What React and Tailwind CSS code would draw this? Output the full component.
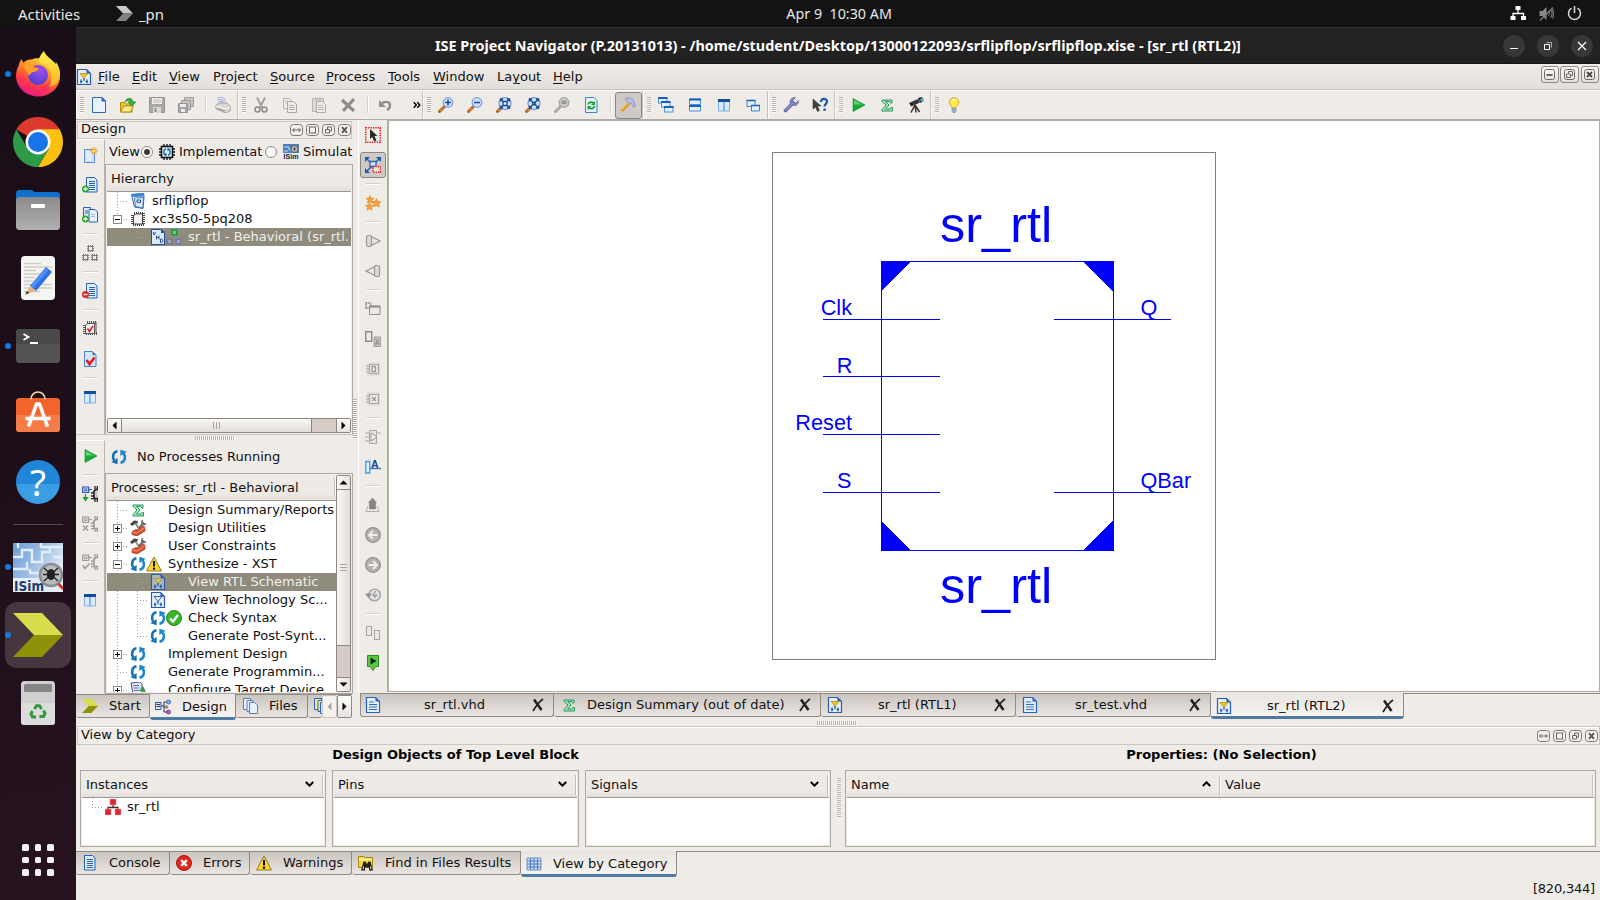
import React from "react";

/* ---------- icon helpers ---------- */
const I = ({ children, w = 16, h = 16, vb = "0 0 16 16", className = "" }) => (
  <svg width={w} height={h} viewBox={vb} fill="none" className={`block shrink-0 ${className}`}>
    {children}
  </svg>
);

const NewFile = () => (
  <I>
    <path d="M1.500.5h9.500l3.500 3.500v11.500h-13z" fill="#e9f3ff" stroke="#2f66b5" />
    <path d="M11 .5v3.500h3.500z" fill="#2a62c4" stroke="#2f66b5" />
  </I>
);
const OpenFile = () => (
  <I>
    <path d="M.5 5.500h4.500l1 1.500h6v8H.5z" fill="#e9c92c" stroke="#b58d12" />
    <path d="M.7 15l3-6h9.800l-3 6z" fill="#fbe98a" stroke="#b58d12" />
    <path d="M5 4.500c2-4.500 7.500-4 8 .5h2.800L12 9 7.800 5h2.400c-.4-1.800-2.800-2-5.200-.5z" fill="#3fb13a" stroke="#22831f" strokeWidth=".7" />
  </I>
);
const Save = () => (
  <I>
    <path d="M.5.5h15v15h-15z" fill="#a7a7a7" stroke="#959595" />
    <path d="M3 1h10v6H3z" fill="#f1efed" />
    <path d="M4 3h8M4 5h8" stroke="#bbb" />
    <path d="M4 10h8v6H4z" fill="#dcdad8" />
    <path d="M5.500 11h2v4h-2z" fill="#8c8c8c" />
  </I>
);
const SaveAll = () => (
  <I>
    <path d="M6.500.5h9v9h-9z" fill="#c8c6c4" stroke="#9a9a9a" />
    <path d="M3.500 3.500h9v9h-9z" fill="#c8c6c4" stroke="#9a9a9a" />
    <path d="M.5 6.500h9v9h-9z" fill="#a5a5a5" stroke="#949494" />
    <path d="M2 7h6v3H2zM3 12h4v3H3z" fill="#efedeb" />
  </I>
);
const Printer = () => (
  <I>
    <path d="M3 0l6 1 2 7-6 1z" fill="#f1f5fb" stroke="#a9b9d4" />
    <path d="M4.500 2.500l4 .5M5 4.500l4 .5" stroke="#7d9fd6" />
    <path d="M1 8l4-2h7l4 4v3l-5 3-10-4z" fill="#d9d8d7" stroke="#a3a3a3" />
    <path d="M1 9l10 3 4-2" stroke="#fff" />
    <path d="M3 11.500l7 2.500" stroke="#8c8c8c" />
  </I>
);
const Cut = () => (
  <I>
    <path d="M4 .5l5 10M12 .5l-5 10" stroke="#a2a2a2" strokeWidth="2" />
    <circle cx="4.500" cy="12.500" r="2.500" stroke="#8b8b8b" strokeWidth="1.500" />
    <circle cx="11.500" cy="12.500" r="2.500" stroke="#8b8b8b" strokeWidth="1.500" />
  </I>
);
const Copy = () => (
  <I>
    <path d="M1.500 1.500h6l2 2v8h-8z" fill="#efedeb" stroke="#b0b0b0" />
    <path d="M5.500 4.500h6l3 3v8h-9z" fill="#efedeb" stroke="#a8a8a8" />
    <path d="M7 8.500h5M7 10.500h6M7 12.500h6" stroke="#b4b4b4" />
    <path d="M3 4h3M3 6h2" stroke="#c0c0c0" />
  </I>
);
const Paste = () => (
  <I>
    <path d="M1.500 1.500h11v13h-11z" fill="#dcdad7" stroke="#b7b5b3" />
    <path d="M4 .5h6v3H4z" fill="#c2c0be" />
    <path d="M5.500 4.500h6l3 3v8h-9z" fill="#efedeb" stroke="#adadad" />
    <path d="M7 8.500h5M7 10.500h6M7 12.500h6" stroke="#b9b9b9" />
  </I>
);
const Del = () => (
  <I>
    <path d="M2 3l12 11M14 2L3 14" stroke="#8d8d8d" strokeWidth="3.200" />
  </I>
);
const Undo = () => (
  <I>
    <path d="M4 7c3-3 9-3 9 1 0 2-1 4-3 5" stroke="#8f8f8f" strokeWidth="2.400" />
    <path d="M2 3v7h7z" fill="#8f8f8f" />
  </I>
);
const Lens = ({ kind }) => {
  const gray = kind === "sel";
  const wide = kind === "fit" || kind === "fit2";
  const cx = wide ? 9 : 10;
  const cy = wide ? 6.500 : 5.500;
  const r = wide ? 6 : 4.800;
  return (
    <I>
      <path d="M1.500 14.500L6 10" stroke={gray ? "#a5a5a5" : "#b3641e"} strokeWidth="3" strokeLinecap="round" />
      <path d="M2 14l3.500-3.500" stroke={gray ? "#bdbdbd" : "#e09a4c"} strokeWidth="1" />
      <circle cx={cx} cy={cy} r={r} fill={gray ? "#c9c9c9" : "#cfe2fa"} stroke={gray ? "#a8a8a8" : "#7fa3dc"} strokeWidth="1.300" />
      {kind === "in" && <path d="M10 2.500v6M7 5.500h6" stroke="#1f53ae" strokeWidth="1.600" />}
      {kind === "out" && <path d="M7 5.500h6" stroke="#1f53ae" strokeWidth="1.600" />}
      {wide && (
        <g stroke="#1b4694" strokeWidth="1.300">
          <path d="M5 2.500l8 8M13 2.500l-8 8" />
          <path d="M4.500 4.500v-2.500h2.500M13.500 4.500v-2.500h-2.500M4.500 8.500v2.500h2.500M13.500 8.500v2.500h-2.500" />
          {kind === "fit" ? <path d="M7 4.500h4v4H7z" fill="#eef5ff" /> : <path d="M8 5.500h2v2H8z" fill="#eef5ff" />}
        </g>
      )}
      {gray && <path d="M7.500 3.500h5v3.500h-5z" fill="#989898" />}
    </I>
  );
};
const RefreshPage = () => (
  <I>
    <path d="M2.500.5h8.500l3 3v12H2.500z" fill="#e2f1ff" stroke="#3a86cf" />
    <path d="M5 7.500c1-3 5-3 6-.5M11.500 9c-1 3.500-5 3-6 1" stroke="#27a02b" strokeWidth="1.800" />
    <path d="M12 4v4H8zM4.500 13V9h4z" fill="#27a02b" />
  </I>
);
const Hammer = () => (
  <I>
    <path d="M1.500 14L9 6.500" stroke="#d99512" strokeWidth="3" />
    <path d="M1.500 13L8.500 6" stroke="#f9d468" strokeWidth="1" />
    <path d="M5 2c3-2 6-1.500 8 1l2.500 6-2 1.500-2-4-3-.5-2-2z" fill="#b9bde4" stroke="#7d82ba" strokeWidth=".7" />
  </I>
);
const Cascade = () => (
  <I>
    {[[0.5, 0.5], [3.500, 4.500], [6.500, 9.500]].map(([x, y]) => (
      <g key={x}>
        <rect x={x} y={y} width="8.500" height="5.500" fill="#e2f0fd" stroke="#4c93d8" />
        <path d={`M${x - 0.5} ${y + 0.5}h9.500`} stroke="#1c5fb8" strokeWidth="2" />
      </g>
    ))}
  </I>
);
const TileH = () => (
  <I>
    <path d="M2.500 2h11v5.500h-11zM2.500 9h11v5h-11z" fill="#e2f0fd" stroke="#4c93d8" />
    <path d="M2 2.500h12M2 9h12" stroke="#1c5fb8" strokeWidth="2" />
  </I>
);
const Columns = () => (
  <I>
    <path d="M2.500 2.500h11v11.500h-11z" fill="#d9eafc" stroke="#7fb0e6" />
    <path d="M2 3.500h12" stroke="#164b9c" strokeWidth="3" />
    <path d="M8 5v9" stroke="#6ea6e2" strokeWidth="1.500" />
  </I>
);
const Layer = () => (
  <I>
    <path d="M2 3.500h8v6H2z" fill="#e2f0fd" stroke="#3e88d4" />
    <path d="M6.500 8.500h8v5.500h-8z" fill="#e2f0fd" stroke="#3e88d4" />
    <path d="M1.500 3.500h9M6 8.500h9" stroke="#1c5fb8" strokeWidth="1.500" />
  </I>
);
const Wrench = () => (
  <I>
    <path d="M2.500 13.500L10 6" stroke="#6a6bb0" strokeWidth="3.600" strokeLinecap="round" />
    <path d="M12.500.5L10 3l.5 2.500L13 6l2.500-2.500c.5 3-2 5.500-5 5L7 6c-.5-3 2-6 5.500-5.500z" fill="#7f83c4" stroke="#5557a0" strokeWidth=".6" />
    <path d="M2.500 13L9 6.500" stroke="#b3b5e2" />
  </I>
);
const WhatsThis = () => (
  <I>
    <path d="M1 2v10l2.500-2 2 4.500 2-1L5.500 9H9z" fill="#444" stroke="#222" strokeWidth=".5" />
    <path d="M9 5c0-4 6-4 6-.5 0 2.500-2.500 2.500-2.500 5" stroke="#1c57a8" strokeWidth="2.200" />
    <path d="M11.400 11.500h2.400v2.300h-2.400z" fill="#1c57a8" />
  </I>
);
const Play = () => (
  <I>
    <path d="M3 1.500l12 6.500-12 6.500z" fill="#14ad35" stroke="#0e8a28" strokeWidth=".6" />
    <path d="M4 3l8 4.500H4z" fill="#5ed674" />
  </I>
);
const Sigma = () => (
  <I>
    <path d="M3 3h10v3h-1.500L10.500 4.500H6.500L10 8l-3.500 4h4.500l1-1.500h1.500V14H3v-1.500L7 8 3 4.500z" fill="#a7e6bd" stroke="#26985c" />
  </I>
);
const Telescope = () => (
  <I>
    <path d="M1 6l9-4 2 3.500-9 4z" fill="#333" />
    <path d="M10 1l4-1 1.500 4-3 2z" fill="#222" />
    <circle cx="14" cy="3" r="1.800" fill="#4ab3c6" />
    <path d="M7 8l-4 7.500M7 8l1 7.500M7 8l4.500 7" stroke="#333" strokeWidth="1.500" />
  </I>
);
const Bulb = () => (
  <I>
    <path d="M8 .8c-3 0-4.800 2-4.800 4.500C3.200 8 6 8.500 6 11h4c0-2.500 2.800-3 2.800-5.700C12.800 2.800 11 .8 8 .8z" fill="#ffe94e" stroke="#e0a91c" />
    <path d="M6.500 3.500c1-1 2-1 3-.5" stroke="#fff" strokeWidth="1.500" />
    <path d="M6 11.500h4V14l-1 1.500H7L6 14z" fill="#9fb4cf" stroke="#6c86ab" strokeWidth=".7" />
  </I>
);
const Doc = ({ x = 4, y = 0 }) => (
  <g transform={`translate(${x} ${y})`}>
    <path d="M.5.5h8l2.500 2.500v12H.5z" fill="#dcecfd" stroke="#2b63b4" />
    <path d="M3 4.500h6M3 6.500h6M3 8.500h6M3 10.500h6M3 12.500h6" stroke="#2b63b4" />
  </g>
);
const DocBlue = () => (
  <I>
    <path d="M1.500.5h9l4 4v11h-13z" fill="#e4f0fe" stroke="#2a63bb" strokeWidth="1.200" />
    <path d="M10.500.5v4h4z" fill="#2a63bb" />
    <path d="M4 5h5M4 7.500h8M4 10h8M4 12.500h8" stroke="#2f6cc4" strokeWidth="1.200" />
  </I>
);
const AddDoc = () => (
  <I>
    <Doc />
    <circle cx="3.500" cy="12" r="3.500" fill="#2fa52e" />
    <path d="M3.500 10v4M1.500 12h4" stroke="#fff" strokeWidth="1.300" />
  </I>
);
const AddCopy = () => (
  <I>
    <path d="M1.500.5h7v12h-7z" fill="#dcecfd" stroke="#2b63b4" />
    <path d="M3 4h3M3 6h3" stroke="#2b63b4" />
    <path d="M7 2.500h6l2.500 2.500v10H7z" fill="#e6f2ff" stroke="#2b63b4" />
    <path d="M9 7.500h4M9 9.500h4" stroke="#9bbfe8" />
    <circle cx="3.500" cy="12" r="3.500" fill="#2fa52e" />
    <path d="M3.500 10v4M1.500 12h4" stroke="#fff" strokeWidth="1.300" />
  </I>
);
const RemoveDoc = () => (
  <I>
    <Doc />
    <circle cx="3.500" cy="11.500" r="3.500" fill="#dc2c1c" />
    <path d="M1.500 11.500h4" stroke="#fff" strokeWidth="1.400" />
  </I>
);
const NewSource = () => (
  <I>
    <path d="M2.500 2.500h10v13h-10z" fill="#cbdff8" stroke="#5d8fd6" />
    <path d="M4 4h6v10H4z" fill="#e1edfb" />
    <path d="M12 0v8M8 4h8M9.500 1.500l5 5M14.500 1.500l-5 5" stroke="#f09a2c" strokeWidth="1.100" />
    <circle cx="12" cy="4" r="1.600" fill="#ffe06a" />
  </I>
);
const MiniChip = ({ x, y, c, bg }) => (
  <g transform={`translate(${x} ${y})`}>
    <path d="M1 .5h6M1 6.500h6M.5 1v6M6.500 1v6" stroke={c} strokeDasharray="1 1" />
    <rect x="1.500" y="1.500" width="4" height="4" fill={bg} stroke={c} />
  </g>
);
const Cells = ({ a = "#7d7d7d", b = "#7d7d7d", bg = "#efebe7", bg2 }) => (
  <I>
    <MiniChip x={5} y={0} c={a} bg={bg} />
    <MiniChip x={0} y={9} c={b} bg={bg2 || bg} />
    <MiniChip x={9} y={9} c={b} bg={bg2 || bg} />
  </I>
);
const ChipCheck = () => (
  <I>
    <path d="M5 1.500h10M2.500 4v10M15 12.500H4M13.500 1.500v12" stroke="#555" strokeWidth="3" strokeDasharray="1 1" />
    <path d="M3.500 4.500l2-2h7v10h-9z" fill="#eee" stroke="#555" />
    <path d="M5.500 7.500l2 3 3.500-5.500" stroke="#d91e2c" strokeWidth="1.600" />
  </I>
);
const DocCheck = () => (
  <I>
    <path d="M2.500.5h8l3.500 3.500v11.500h-11.500z" fill="#d5e6fb" stroke="#4a82cc" />
    <path d="M10.500.5v3.500h3.500z" fill="#3d78c8" />
    <path d="M4.500 9l3 4 5-6.500" stroke="#e01828" strokeWidth="2.600" />
  </I>
);
const PlugChip = ({ kind }) => {
  const on = kind === "run";
  const c = on ? "#222" : "#9a9a9a";
  return (
    <I>
      <path d="M.7 1h6v5.500h-6z" fill={on ? "#dfeafc" : "#e6e4e2"} stroke={on ? "#2855b0" : "#9a9a9a"} strokeWidth="1.200" />
      <path d="M2 3h3.500M2 4.700h3.500M7 3.500h3" stroke={on ? "#2855b0" : "#9a9a9a"} />
      {kind === "run" && <path d="M3.500 8v5M1.500 11.500l2 3 2-3z" stroke="#1f9a2b" fill="#1f9a2b" strokeWidth="1.200" />}
      {kind === "stop" && <path d="M1 9.500l5 5M6 9.500l-5 5" stroke={c} strokeWidth="1.500" />}
      {kind === "ok" && <path d="M1 11.500l2 3 4.500-5" stroke={c} strokeWidth="1.500" />}
      <path d="M16 3.500h-2l-2 1.500v7.500h4" stroke={c} strokeWidth="1.600" fill={on ? "#ccc" : "none"} />
      <path d="M9 7h3M9 10h3M9 12.700h3M13 13v3M15.300 13v3M13 0v3.500M15.300 0v3.500" stroke={c} strokeWidth="1.300" />
    </I>
  );
};
const Cycle = () => (
  <I>
    <path d="M6.500 2.300C2 3 1 8 3.200 11.500" stroke="#1672b5" strokeWidth="2.600" />
    <path d="M.3 13.200L6.600 9v6.200z" fill="#1672b5" />
    <path d="M9.500 13.700c4.500-.7 5.500-5.700 3.300-9.200" stroke="#1d84c9" strokeWidth="2.600" />
    <path d="M15.700 2.800L9.400 7V.8z" fill="#1d84c9" />
  </I>
);
const Warn = () => (
  <I>
    <path d="M8 1l7.500 14H.5z" fill="#fcd424" stroke="#8d8038" strokeLinejoin="round" />
    <path d="M8 5v5.500" stroke="#111" strokeWidth="2" />
    <circle cx="8" cy="12.800" r="1.200" fill="#111" />
  </I>
);
const Ok = () => (
  <I>
    <circle cx="8" cy="8" r="7.500" fill="#3ab62c" stroke="#23861a" />
    <path d="M4 8.500l3 3 5-6.500" stroke="#fff" strokeWidth="2.200" />
  </I>
);
const ErrorIc = () => (
  <I>
    <circle cx="8" cy="8" r="7.500" fill="#e3261b" stroke="#a31710" />
    <path d="M5.200 5.200l5.600 5.600M10.800 5.200l-5.600 5.600" stroke="#fff" strokeWidth="2.400" />
  </I>
);
const Tools = () => (
  <I>
    <path d="M0 4l4-3.500L8 1 7.500 3.500 5 4 2 6z" fill="#4a4a4a" />
    <path d="M5.500 3.500l4 6" stroke="#8a8a8a" strokeWidth="1.700" />
    <path d="M14 2.500L8.500 8.500" stroke="#6c6c6c" strokeWidth="2" />
    <path d="M12.500 0L11.800 3l1.700 1.500L16 3.800" stroke="#6c6c6c" strokeWidth="1.600" />
    <path d="M2 11.500l4-2 2.500.5 4-4 2.500 1v4L7 16l-5-1.500z" fill="#d5502e" stroke="#9d3118" strokeWidth=".7" />
    <path d="M2.500 12l4.200 1.200L15 7.500" stroke="#f3a088" />
  </I>
);
const SchemFile = ({ c = "#f3c51a", bg = "#e3effd" }) => (
  <I>
    <path d="M1.500.5h9l4 4v11h-13z" fill={bg} stroke="#2a5db0" strokeWidth="1.200" />
    <path d="M10.500.5v4h4z" fill="#2a5db0" />
    <path d="M4 4.500h8L8 9.500z" fill={c} stroke={c === "none" ? "#1a3a80" : "#b8921a"} strokeWidth=".8" />
    <path d="M8 9v3M4 12.500h2.500M9.500 12.500H12M5 10.500v4M11 10.500v4" stroke="#1d4fa3" strokeWidth="1.200" />
  </I>
);
const VhdFile = () => (
  <I>
    <path d="M1.500.5h10l3 3v12h-13z" fill="#d9ebfb" stroke="#1e4f98" />
    <path d="M11 .5v3.500h3.500z" fill="#1e4f98" />
    <path d="M3 3l1.300 3L5.500 3M6.500 6.500v4M9 6.500v4M6.500 8.500H9M10.500 10v3.500h1.200c1.500-.5 1.500-3 0-3.500z" stroke="#1e3f78" strokeWidth=".9" />
  </I>
);
const ProjFile = () => (
  <I>
    <path d="M1.500 1.500l12-1 .5 3-1 12-8.500-1.500z" fill="#eef5fd" stroke="#2863ae" />
    <path d="M1 1l12.500-1 .5 3.500-11 .5z" fill="#3c86d2" />
    <path d="M4.500 5l9-.5-.6 10.500L5.500 13.500z" fill="#dbeafb" stroke="#2863ae" strokeWidth=".8" />
    <path d="M7 7h3.500v2.300H7z" fill="#fff" stroke="#1f4a96" />
  </I>
);
const ChipIc = () => (
  <I>
    <path d="M4 2.500h10M2.500 4v10M14 13.500H3M13.500 2v12" stroke="#444" strokeWidth="3" strokeDasharray="1 1" />
    <path d="M3.500 5l2-2h7v10h-9z" fill="#f6f6f6" stroke="#444" />
  </I>
);
const ImplIc = () => (
  <I>
    <rect x="2.500" y="2.500" width="11" height="11" fill="#e8f2fc" stroke="#111" strokeWidth="1.600" />
    <path d="M5 0v2M8 0v2M11 0v2M5 14v2M8 14v2M11 14v2M0 5h2M0 8h2M0 11h2M14 5h2M14 8h2M14 11h2" stroke="#111" strokeWidth="1.300" />
    <path d="M7 4.800C4.600 5 4.500 8.500 5.500 10M9 11.200c2.400-.2 2.500-3.700 1.500-5.200" stroke="#1672b5" strokeWidth="1.500" />
    <path d="M4 10.800L7.600 8.700v3.600zM12 5.200L8.400 7.300V3.700z" fill="#1672b5" />
  </I>
);
const SimIc = () => (
  <I>
    <rect width="16" height="16" fill="#4f80c0" />
    <path d="M1 3h5v3h4M1 7h4" stroke="#c5daf4" />
    <circle cx="11.500" cy="5" r="3.500" fill="#b8b8b8" stroke="#666" strokeWidth="1.200" />
    <path d="M11.500 3.500v3" stroke="#333" strokeWidth="1.500" />
    <rect y="9" width="16" height="7" fill="#dfe9f6" />
    <text x=".5" y="15.300" fontSize="7.500" fontWeight="700" fill="#123" fontFamily="Liberation Sans, sans-serif" textLength="15" lengthAdjust="spacingAndGlyphs">ISim</text>
  </I>
);
const HierRed = () => (
  <I>
    <path d="M8 5v4M3 11V8.500h10V11" stroke="#333" strokeWidth="1.300" />
    <path d="M5 0h6v6H5zM0 10h6v6H0zM10 10h6v6h-6z" fill="#e02430" stroke="#f58a8e" strokeWidth=".6" />
  </I>
);
const Config = () => (
  <I>
    <path d="M1 1l9-1 2 2v9l-9 1z" fill="#e8ecfa" stroke="#3b4ba0" />
    <path d="M3 3.500h6M3.500 6h6M4 8.500h5" stroke="#56b" />
    <path d="M9 9l4-5 3 6z" fill="#2ea044" />
    <path d="M10 12l4-3 2 3-3 3z" fill="#d03a88" />
  </I>
);
const Flow = () => (
  <I>
    <path d="M.5 3.500h5.500v7H.5z" fill="#dce9fb" stroke="#2a57ad" />
    <path d="M1.500 5.500h3.500M1.500 7.500h3.500M6 7h3M9 3v10M9 3h3M9 13h3M9 8h2" stroke="#333" />
    <circle cx="13.500" cy="3" r="2" fill="#7cb4ec" stroke="#2a57ad" strokeWidth=".8" />
    <circle cx="11.500" cy="8" r="1.800" fill="#8a8a8a" />
    <circle cx="13.500" cy="13" r="2" fill="#b55fd0" stroke="#6b2a86" strokeWidth=".8" />
  </I>
);
const FilesIc = ({ a = "#e7f1fd", s = "#5d80bc" }) => (
  <I>
    <path d="M.5.5h7v11h-7z" fill={a} stroke={s} />
    <path d="M4 2.500h6v11H4z" fill={a} stroke={s} />
    <path d="M6.500 4.500h5l3 2.500v8.500h-8z" fill={a} stroke={s} />
  </I>
);
const Folder2 = () => (
  <I>
    <path d="M.5 1.500h5l1.500 1h7.500v10h-14z" fill="#f5d43a" stroke="#a98716" />
    <path d="M1 4.500h13" stroke="#fff2a4" strokeWidth="2" />
    <path d="M3 15.500l2.500-9h2l1 2h1l1-2h2l2.500 9h-4v-3h-4v3z" fill="#222" />
    <path d="M5.300 11.500v2.500M12.700 11.500v2.500" stroke="#eee" />
  </I>
);
const GridIc = () => (
  <I>
    <path d="M1 2h14v12H1z" fill="#cfe0f8" stroke="#6d94cf" />
    <path d="M1 5h14M1 8h14M1 11h14M4.500 2v12M8 2v12M11.500 2v12" stroke="#4776bd" />
  </I>
);
const Chevron = ({ w, h, a, b }) => (
  <svg width={w} height={h} viewBox="0 0 50 44" preserveAspectRatio="none" className="block shrink-0">
    <path d="M0 0h29l21 22H21z" fill={a} />
    <path d="M21 22h29L29 44H0z" fill={b} />
  </svg>
);
const TabX = () => (
  <I w={14} h={14} vb="0 0 14 14">
    <path d="M3 1.500L10.500 12" stroke="#222" strokeWidth="2.600" />
    <path d="M12 1C8.500 3.500 5 8 2 13" stroke="#222" strokeWidth="1.700" />
  </I>
);

/* schematic tool icons */
const SelectArrow = () => (
  <I>
    <path d="M.75.75h14.500v14.500H.75z" stroke="#f01414" strokeWidth="1.500" strokeDasharray="1.300 1.100" />
    <path d="M5 2v10l2.200-2 2 4.500 2.300-1-2-4.500h3z" fill="#2a2a2a" />
  </I>
);
const FitSel = () => (
  <I>
    <path d="M2 2l12 12M14 2L2 14" stroke="#2c66b8" strokeWidth="1.500" />
    <path d="M0 0h5L0 5zM16 0h-5l5 5zM0 16h5L0 11z" fill="#1e56a8" />
    <path d="M5 4.500h6v5H5z" fill="#d8e8fa" stroke="#2c66b8" strokeWidth="1.300" />
    <path d="M8 9.500h7.500v5.700H8z" fill="#efe5e2" stroke="#f01414" strokeWidth="1.500" strokeDasharray="1.300 1.100" />
  </I>
);
const Star = ({ x, y, r }) => (
  <path transform={`translate(${x} ${y}) scale(${r})`} d="M0-4l1.200 2.600 2.800.3-2.100 1.900.7 2.900L0 2.200l-2.600 1.500.7-2.900L-4-1.100l2.800-.3z" fill="#f7a234" stroke="#dd7a12" strokeWidth=".5" />
);
const Stars = () => (
  <I>
    <Star x={5} y={4.500} r={1} />
    <Star x={11.500} y={8} r={1.100} />
    <Star x={4.500} y={11.500} r={1} />
  </I>
);
const Cone = ({ flip }) => (
  <I className={flip ? "-scale-x-100" : ""}>
    <path d="M5 3l10 5-10 5" stroke="#999" strokeWidth="1.300" fill="#eceae7" />
    <path d="M1.500 4c0-2 5-2 5 0v8c0 2-5 2-5 0z" fill="#dcdad8" stroke="#999" strokeWidth="1.200" />
  </I>
);
const GrayWin = () => (
  <I>
    <rect x="1" y="2" width="5" height="5" stroke="#8f8f8f" strokeWidth="1.800" strokeDasharray="1 .8" />
    <path d="M4.500 5.500h10.500v8H4.500z" fill="#eceae7" stroke="#8f8f8f" />
    <path d="M4 5.500h11.500" stroke="#8f8f8f" strokeWidth="2.200" />
  </I>
);
const GrayTwo = () => (
  <I>
    <path d="M.7 .7h6v9.600h-6z" stroke="#8b8b8b" strokeWidth="1.400" />
    <path d="M9 6h6.500v9.500H9z" fill="#c4c2c0" stroke="#a0a0a0" />
    <path d="M10.500 8l3.500 5M14 8l-3.500 5M10 13h4" stroke="#888" />
  </I>
);
const GrayChip = ({ x }) => (
  <I>
    <path d="M2 1h13v14H2z" fill="#e2dfdc" />
    <path d="M4.500 3.500h9v9h-9z" fill="#eceae7" stroke="#a5a5a5" strokeWidth="1.200" />
    <path d="M1 5h4M1 8h4M1 11h4" stroke="#a5a5a5" />
    {x ? <path d="M7 6l4 4M11 6l-4 4" stroke="#999" strokeWidth="1.200" /> : <path d="M7 5.500h3.500v5H7z" stroke="#999" strokeWidth="1.300" />}
  </I>
);
const GrayGate = () => (
  <I>
    <path d="M4.500 1.500h7v13h-7z" fill="#e4e1de" stroke="#aaa" />
    <path d="M6 4l6 4-6 4z" fill="#eee" stroke="#9a9a9a" />
    <path d="M0 4h4M0 8h4M0 12h4M12 4h4" stroke="#aaa" strokeWidth="1.200" />
  </I>
);
const TextTool = () => (
  <I>
    <path d="M.8 2.500h4v11.500h-4z" fill="#e0f4ff" stroke="#3f9be6" strokeWidth="1.300" />
    <path d="M5 9.500h11" stroke="#2b7fd0" strokeWidth="1.400" />
    <text x="6" y="8.500" fontSize="10.500" fontWeight="700" fill="#1d3c92" fontFamily="Liberation Sans, sans-serif">A</text>
  </I>
);
const UpHier = () => (
  <I>
    <path d="M3 9L1 14.500h13L12 9" stroke="#b0aeac" />
    <path d="M7.500 1l4 4.500H10.500V12H4.500V5.500H3.500z" fill="#858585" stroke="#777" strokeWidth=".5" />
  </I>
);
const NavCircle = ({ flip }) => (
  <I className={flip ? "-scale-x-100" : ""}>
    <circle cx="8" cy="8" r="7.300" fill="#b5b3b1" stroke="#8f8f8f" strokeWidth="1.300" />
    <path d="M12.500 8H4.500M8 4L4 8l4 4" stroke="#f0efee" strokeWidth="1.800" />
  </I>
);
const Hist = () => (
  <I>
    <circle cx="9.500" cy="8" r="5.800" fill="#e6e4e2" stroke="#a9a9a9" strokeWidth="1.600" />
    <path d="M0 6.500h7L3.500 11z" fill="#8e8e8e" />
    <path d="M10.500 4L8 8.500h4.500M10 8.500V11" stroke="#999" strokeWidth="1.300" />
  </I>
);
const Pair = () => (
  <I>
    <path d="M1.500 1.500h5v9h-5zM9.500 5.500h5v9h-5z" fill="#eceae7" stroke="#a8a8a8" strokeWidth="1.100" />
  </I>
);
const GreenTag = () => (
  <I>
    <path d="M2.500.5h11v11h-3L8 15.500 5.500 11.500h-3z" fill="#58c83c" stroke="#2c8c1c" />
    <path d="M5.500 2.500l6 3.500-6 3.500z" fill="#123" />
  </I>
);

/* ---------- small building blocks ---------- */
const Cell = ({ children, on }) => (
  <div className="flex h-full w-[29px] shrink-0 items-center justify-center">
    {on ? (
      <div className="flex h-[27px] w-[27px] items-center justify-center rounded-[3px] border border-[#8a857f] bg-[#cfcac5]">{children}</div>
    ) : (
      children
    )}
  </div>
);
const HSep = () => (
  <div className="flex w-2 shrink-0 items-center pl-1">
    <div className="h-4 w-[2px] border-l border-[#d3cfca] bg-white" />
  </div>
);
const Grip = () => (
  <div className="mr-[0.5px] h-4 w-1 shrink-0 bg-[repeating-linear-gradient(to_bottom,#b7b3ae_0_1px,#fbfaf9_1px_2px)]" />
);
const Group = ({ children, className }) => (
  <div className={`flex h-full shrink-0 items-center border-l border-r border-l-[#fbfaf9] border-r-[#c6c1bc] pl-[3px] ${className}`}>
    <Grip />
    {children}
  </div>
);
const VCell = ({ children, on }) => (
  <div className="flex h-[30px] w-full shrink-0 items-center justify-center">
    {on ? (
      <div className="flex h-[26px] w-[26px] items-center justify-center rounded-[3px] border border-[#8a857f] bg-[#cfcac5]">{children}</div>
    ) : (
      children
    )}
  </div>
);
const VSep = () => (
  <div className="flex h-2 w-full shrink-0 items-center justify-center">
    <div className="h-[2px] w-[15px] border-t border-[#d3cfca] bg-white" />
  </div>
);
const DockBtn = ({ kind }) => (
  <svg width="13" height="12" viewBox="0 0 13 12" fill="none" className="block shrink-0">
    <rect x=".5" y=".5" width="12" height="11" rx="3" fill="#f4f2f0" stroke="#7c7772" />
    {kind === "h" && <path d="M2.500 6h8M4.500 4L2.500 6l2 2M8.500 4l2 2-2 2" stroke="#66625e" />}
    {kind === "max" && <rect x="3.500" y="3" width="6" height="6" stroke="#66625e" />}
    {kind === "res" && <path d="M3.500 5.500h4v3.500h-4zM5.500 5V3h4v4H8" stroke="#66625e" />}
    {kind === "x" && <path d="M4 3.200l5 5.600M9 3.200L4 8.800" stroke="#55514d" strokeWidth="1.800" />}
  </svg>
);
const DockBtns = () => (
  <div className="flex items-center gap-[3px]">
    <DockBtn kind="h" />
    <DockBtn kind="max" />
    <DockBtn kind="res" />
    <DockBtn kind="x" />
  </div>
);
const Radio = ({ on }) => (
  <svg width="12" height="12" viewBox="0 0 12 12" className="block shrink-0">
    <circle cx="6" cy="6" r="5.500" fill="#fff" stroke="#8f8a85" />
    {on && <circle cx="6" cy="6" r="3" fill="#3a3a3a" />}
  </svg>
);
const Arrow = ({ d, c = "#000" }) => (
  <svg width="9" height="9" viewBox="0 0 9 9" className="block shrink-0">
    <path d={d} fill={c} />
  </svg>
);
const AL = "M6.500.5v8l-4-4z";
const AR = "M2.500.5v8l4-4z";
const AU = "M.5 6.500h8l-4-4z";
const AD = "M.5 2.500h8l-4 4z";

/* ---------- launcher ---------- */
const DockCell = ({ children, dot, active }) => (
  <div className="relative flex h-[68px] w-full shrink-0 items-center justify-center">
    {dot && <div className="absolute left-[5px] top-[31px] z-10 h-[6px] w-[6px] rounded-full bg-[#0f7ae5]" />}
    {active ? <div className="flex h-[66px] w-[66px] items-center justify-center rounded-xl bg-[#45363f]">{children}</div> : children}
  </div>
);

const Firefox = () => (
  <svg width="46" height="46" viewBox="0 0 46 46" className="block">
    <defs>
      <linearGradient id="ffa" x1=".8" y1="0" x2=".3" y2="1">
        <stop offset="0" stopColor="#fff44f" />
        <stop offset=".35" stopColor="#ff9a1f" />
        <stop offset=".7" stopColor="#ff3b47" />
        <stop offset="1" stopColor="#e31587" />
      </linearGradient>
      <radialGradient id="ffb" cx=".6" cy=".25" r=".8">
        <stop offset="0" stopColor="#a34bf0" />
        <stop offset="1" stopColor="#4b3fd0" />
      </radialGradient>
      <linearGradient id="ffc" x1="0" y1="0" x2="0" y2="1">
        <stop offset="0" stopColor="#fff14e" />
        <stop offset="1" stopColor="#ffb028" />
      </linearGradient>
    </defs>
    <path d="M4 14c0-2 1-4 3-6 0 2 .5 3 1.500 3.500C11 9 14 8 17 8.500c2-1 4-1.500 6-1C30 3 38 10 41 13c3 5 4.500 9 4 13-.5 11-10 19.500-22 19.500S1 36 1 25c0-4 1-8 3-11z" fill="url(#ffa)" />
    <path d="M24 10c0-4 2-7 5-10 2 6 9 8 11 14 1-1 1-2 1-3 3 4 4 8 4 13-1 9-8 13-12 11 5-6 5-15-2-20-3-2-7-2-7-5z" fill="url(#ffc)" />
    <circle cx="23" cy="24" r="10" fill="url(#ffb)" />
    <path d="M8 14c4-2 9-1 11 2 2 1 4 1 5 1-1 3-4 4-6 4-2 1-3 2-4 4-2-4-4-8-6-11z" fill="#ff9d27" />
    <path d="M3 30c4 9 14 12 22 8 5-2 9-6 10-10 3 6-3 15-14 16C12 44 5 38 3 30z" fill="#f7266f" opacity=".6" />
  </svg>
);
const Chrome = () => (
  <svg width="50" height="50" viewBox="0 0 50 50" className="block">
    <path d="M25 25L3.350 12.500A25 25 0 0 1 46.650 12.500z" fill="#dd3a2e" />
    <path d="M25 12.500h21.650A25 25 0 0 1 25 50l11-18.500z" fill="#fcc211" />
    <path d="M3.350 12.500A25 25 0 0 0 25 50l11-18.700-21.500 0z" fill="#2d9a48" />
    <path d="M25 12.500h21.650L36 31.300z" fill="#fcc211" />
    <circle cx="25" cy="25" r="12.500" fill="#fff" />
    <circle cx="25" cy="25" r="10" fill="#1a73e8" />
  </svg>
);
const FilesApp = () => (
  <svg width="44" height="42" viewBox="0 0 44 42" className="block">
    <defs>
      <linearGradient id="fla" x1="0" y1="0" x2="0" y2="1">
        <stop offset="0" stopColor="#8b8b8b" />
        <stop offset="1" stopColor="#b0b0b0" />
      </linearGradient>
    </defs>
    <path d="M0 5c0-3 1-4 4-4h10c3 0 3 2 6 2h20c3 0 4 1 4 4v12H0z" fill="#0f6fcd" />
    <rect y="8" width="44" height="33" rx="3.500" fill="url(#fla)" />
    <rect x="15" y="15" width="14" height="4" rx="1" fill="#fff" />
  </svg>
);
const Editor = () => (
  <svg width="34" height="44" viewBox="0 0 34 44" className="block">
    <rect width="34" height="44" rx="4" fill="#f4f4f3" />
    <path d="M3 7.500h17M3 11h28M3 14.500h12M3 18h17M3 21.500h11M3 25h9M3 28.500h28M3 32h28M3 35.500h16" stroke="#cfccc0" strokeWidth="1.300" />
    <path d="M25 11l6 5-16 19-6-5z" fill="#2f6fe0" />
    <path d="M25 11l3 2.500L12 32.500 9 30z" fill="#4f8cf3" />
    <path d="M9 30l6 5-10 3z" fill="#f0b37e" />
    <path d="M6 35l2.500 2L4 38.500z" fill="#333" />
  </svg>
);
const Terminal = () => (
  <svg width="44" height="34" viewBox="0 0 44 34" className="block">
    <rect width="44" height="34" rx="3.500" fill="#535353" />
    <path d="M0 15h44V3.500A3.500 3.500 0 0 0 40.500 0h-37A3.500 3.500 0 0 0 0 3.500z" fill="#494949" />
    <path d="M7.500 5l5 3-5 3M14 14h8" stroke="#fff" strokeWidth="1.800" fill="none" />
  </svg>
);
const Software = () => (
  <svg width="44" height="42" viewBox="0 0 44 42" className="-mt-[6px] block">
    <rect y="8" width="44" height="34" rx="3.500" fill="#f2642c" />
    <path d="M0 25h44v13.500a3.500 3.500 0 0 1-3.500 3.500h-37A3.500 3.500 0 0 1 0 38.500z" fill="#f57c49" />
    <path d="M15 9.500c0-10 14-10 14 0" stroke="#f3d9a6" strokeWidth="1.600" fill="none" />
    <path d="M12.500 36.500L20.500 14h3l8 22.500M9.500 28.500h25" stroke="#fff" strokeWidth="3.600" fill="none" strokeLinejoin="round" />
  </svg>
);
const Help = () => (
  <div className="flex h-11 w-11 items-center justify-center rounded-full bg-[linear-gradient(to_bottom,#1f86d8_0_54%,#3b9ee4_54%_100%)]">
    <span className="font-['Noto_Sans',sans-serif] text-[37px] leading-[44px] text-white">?</span>
  </div>
);
const ISim = () => (
  <svg width="50" height="49" viewBox="0 0 50 49" className="block">
    <defs>
      <linearGradient id="isa" x1="0" y1="0" x2="1" y2=".6">
        <stop offset="0" stopColor="#6a9cd8" />
        <stop offset=".5" stopColor="#9dbde4" />
        <stop offset="1" stopColor="#eff3f9" />
      </linearGradient>
    </defs>
    <rect width="50" height="49" fill="url(#isa)" />
    <path d="M0 14h9v-7h10v12h10V9h8V4h13M0 26h14v-7M5 0v5M28 0v4h8M40 14h10M17 26v4h9" stroke="#e2edfa" strokeWidth="2.400" fill="none" />
    <path d="M0 35h50v14H0z" fill="#e6edf6" />
    <circle cx="38" cy="32" r="11" fill="#b9bcbf" stroke="#8b8d90" strokeWidth="2.500" />
    <ellipse cx="38" cy="31.500" rx="4" ry="5.500" fill="#222" />
    <path d="M31 25l14 13M45 25L31 38M30 31.500h16" stroke="#222" strokeWidth="1.400" />
    <path d="M45.500 41l5 5" stroke="#c33" strokeWidth="3" />
    <text x="1" y="47.500" fontSize="14" fontWeight="700" fill="#1d3c70" fontFamily="DejaVu Sans, sans-serif" textLength="30" lengthAdjust="spacingAndGlyphs">ISim</text>
  </svg>
);
const Trash = () => (
  <svg width="34" height="44" viewBox="0 0 34 44" className="block">
    <rect width="34" height="44" rx="3.500" fill="#cfcfcf" />
    <path d="M0 22h34v18.500a3.500 3.500 0 0 1-3.500 3.500h-27A3.500 3.500 0 0 1 0 40.500z" fill="#dcdcdc" />
    <rect x="3" y="3" width="28" height="8" rx="1.500" fill="#858585" />
    <g fill="none" stroke="#2f9a3c" strokeWidth="3">
      <path d="M13.500 28l2-3.200h3l2 3.200" />
      <path d="M22.500 29.500l1.500 3-1.500 3h-4" />
      <path d="M15 36h-3.500L10 33l1.500-3" />
    </g>
  </svg>
);
const Launcher = () => (
  <div className="flex h-[873px] w-[76px] shrink-0 flex-col bg-[linear-gradient(170deg,#190d17_0%,#1d0f19_50%,#27131f_100%)] pt-[13px]">
    <DockCell dot><Firefox /></DockCell>
    <DockCell><Chrome /></DockCell>
    <DockCell><FilesApp /></DockCell>
    <DockCell><Editor /></DockCell>
    <DockCell dot><Terminal /></DockCell>
    <DockCell><Software /></DockCell>
    <DockCell><Help /></DockCell>
    <div className="flex h-[17px] items-center justify-center">
      <div className="h-px w-[50px] bg-[#55494f]" />
    </div>
    <DockCell dot><ISim /></DockCell>
    <DockCell dot active><Chevron w={50} h={44} a="#d9dc4d" b="#8f9108" /></DockCell>
    <DockCell><Trash /></DockCell>
    <div className="mt-[107px] grid grid-cols-3 justify-center gap-[6px] px-[22px]">
      {Array.from({ length: 9 }, (_, i) => (
        <div key={i} className="mx-auto h-[6.500px] w-[6.500px] rounded-[1.500px] bg-[#f1eff0]" />
      ))}
    </div>
  </div>
);

/* ---------- menus, toolbars ---------- */
const MENUS = [
  ["", "F", "ile", "w-[34px]"],
  ["", "E", "dit", "w-[37px]"],
  ["", "V", "iew", "w-[44px]"],
  ["P", "r", "oject", "w-[57px]"],
  ["", "S", "ource", "w-[56px]"],
  ["", "P", "rocess", "w-[62px]"],
  ["", "T", "ools", "w-[45px]"],
  ["", "W", "indow", "w-[64px]"],
  ["La", "y", "out", "w-[56px]"],
  ["", "H", "elp", "w-[40px]"],
];
const WinBtn = ({ children }) => (
  <div className="flex h-[22px] w-[22px] items-center justify-center rounded-full bg-[#373737]">
    <svg width="12" height="12" viewBox="0 0 12 12" fill="none" stroke="#fff" className="block">{children}</svg>
  </div>
);
const MdiBtn = ({ kind, className = "" }) => (
  <div className={`flex h-[17px] w-[18.500px] items-center justify-center rounded-[3px] border border-[#8e8983] bg-[linear-gradient(to_bottom,#fbfaf9,#e4dfda)] ${className}`}>
    <svg width="11" height="11" viewBox="0 0 11 11" fill="none" stroke="#6d6863" className="block">
      <rect x=".5" y=".5" width="10" height="10" rx="2" />
      {kind === "min" && <path d="M2.500 6h6" strokeWidth="2" />}
      {kind === "res" && <path d="M2.500 5h4v3.500h-4zM4.500 4.500v-2h4v4H7" />}
      {kind === "x" && <path d="M3 3l5 5M8 3L3 8" stroke="#4c4844" strokeWidth="1.800" />}
    </svg>
  </div>
);

/* ---------- trees ---------- */
const Expander = ({ s }) => (
  <div className="relative z-10 flex h-[9px] w-[9px] items-center justify-center border border-[#8b8781] bg-white">
    <svg width="5" height="5" viewBox="0 0 5 5" className="block">
      <path d={s === "+" ? "M0 2.500h5M2.500 0v5" : "M0 2.500h5"} stroke="#000" />
    </svg>
  </div>
);
const DotV = ({ className }) => <div className={`absolute w-px bg-[repeating-linear-gradient(to_bottom,#a5a19c_0_1px,transparent_1px_3px)] ${className}`} />;
const DotH = ({ className }) => <div className={`absolute h-px bg-[repeating-linear-gradient(to_right,#a5a19c_0_1px,transparent_1px_3px)] ${className}`} />;

const Row = ({ lvl = 1, exp, icons, text, sel, textPad, last, only }) => (
  <div className={`relative flex h-[18px] shrink-0 items-center overflow-hidden whitespace-nowrap ${sel ? "bg-[#8f8b7d] text-[#f1efe9]" : ""}`}>
    {lvl === 1 ? (
      <>
        {!only && <DotV className={last ? "left-[10px] top-0 h-[9px]" : "left-[10px] top-0 h-full"} />}
        {only && <DotV className="left-[10px] top-0 h-[9px]" />}
        <DotH className="left-[10px] top-[9px] w-[10px]" />
        {exp && <div className="absolute left-[6px] top-[5px]"><Expander s={exp} /></div>}
        <div className="flex w-[23px] shrink-0" />
      </>
    ) : (
      <>
        {!only && !sel && <DotV className="left-[10px] top-0 h-full" />}
        <DotV className={last ? "left-[30px] top-0 h-[9px]" : "left-[30px] top-0 h-full"} />
        <DotH className="left-[30px] top-[9px] w-[10px]" />
        <div className="flex w-[43px] shrink-0" />
      </>
    )}
    <div className={`flex shrink-0 items-center ${textPad}`}>{icons}</div>
    <span>{text}</span>
  </div>
);

const PROCESS_ROWS = [
  { icons: <Sigma />, text: "Design Summary/Reports" },
  { exp: "+", icons: <Tools />, text: "Design Utilities" },
  { exp: "+", icons: <Tools />, text: "User Constraints" },
  { exp: "-", icons: <><Cycle /><Warn /></>, text: "Synthesize - XST" },
  { lvl: 2, icons: <SchemFile c="#cfc678" bg="#aab8c4" />, text: "View RTL Schematic", sel: true },
  { lvl: 2, icons: <SchemFile c="none" />, text: "View Technology Sc..." },
  { lvl: 2, icons: <><Cycle /><Ok /></>, text: "Check Syntax" },
  { lvl: 2, icons: <Cycle />, text: "Generate Post-Synt...", last: true },
  { exp: "+", icons: <Cycle />, text: "Implement Design" },
  { icons: <Cycle />, text: "Generate Programmin..." },
  { exp: "+", icons: <Config />, text: "Configure Target Device" },
];

const HEAD = "bg-[linear-gradient(to_bottom,#efebe7_0%,#edeae6_75%,#e4deda_100%)] border-b border-[#9d9892]";

/* ---------- design dock ---------- */
const DesignDock = () => (
  <div className="flex h-[600px] w-[277px] shrink-0 flex-col">
    <div className="ml-px mt-px flex h-[18px] w-[275px] shrink-0 items-center justify-between border border-[#cbc7c2] pl-[3px]">
      <span className="relative -top-px">Design</span>
      <DockBtns />
    </div>
    <div className="flex h-[295px] shrink-0">
      <div className="ml-px flex h-[295px] w-7 shrink-0 flex-col border-r border-t border-r-[#b9b4ae] border-t-white pr-px">
        <VCell><NewSource /></VCell>
        <VCell><AddDoc /></VCell>
        <VCell><AddCopy /></VCell>
        <VSep />
        <VCell><Cells /></VCell>
        <VSep />
        <VCell><RemoveDoc /></VCell>
        <VSep />
        <VCell><ChipCheck /></VCell>
        <VCell><DocCheck /></VCell>
        <VSep />
        <VCell><Columns /></VCell>
      </div>
      <div className="flex w-[248px] flex-col">
        <div className="flex h-[25px] shrink-0 items-center whitespace-nowrap pl-1">
          <div className="w-8 shrink-0">View</div>
          <Radio on />
          <div className="w-[6px] shrink-0" />
          <ImplIc />
          <div className="ml-1 w-[82px] shrink-0">Implementat</div>
          <div className="w-1 shrink-0" />
          <Radio />
          <div className="w-[6px] shrink-0" />
          <SimIc />
          <div className="ml-1 w-[48px] shrink-0">Simulat</div>
        </div>
        <div className="flex h-[271px] w-[248px] shrink-0 flex-col border border-[#aea9a2] bg-[#efebe7] p-px">
          <div className={`flex h-[26px] shrink-0 items-center pl-1 ${HEAD}`}>Hierarchy</div>
          <div className="flex flex-1 flex-col bg-white">
            <Row icons={<ProjFile />} textPad="w-[22px]" text="srflipflop" />
            <Row icons={<ChipIc />} textPad="w-[22px]" text="xc3s50-5pq208" exp="-" last />
            <Row lvl={2} only sel last icons={<><VhdFile /><Cells a="#1f9a3c" b="#77799f" bg="#7fc78c" bg2="#a5a5c0" /></>} textPad="w-[38px]" text="sr_rtl - Behavioral (sr_rtl." />
          </div>
          <div className="flex h-[15px] shrink-0 rounded-[2px] border border-[#8d8882] bg-[#d5cdc5]">
            <div className="flex w-[14px] items-center justify-center border-r border-[#8d8882] bg-[linear-gradient(to_bottom,#fdfdfc,#e6e2de)]"><Arrow d={AL} /></div>
            <div className="flex w-[190px] items-center justify-center gap-[2px] border-r border-[#8d8882] bg-[linear-gradient(to_bottom,#f8f7f5,#e2ddd8)]">
              <div className="h-[7px] w-px bg-[#aaa5a0]" /><div className="h-[7px] w-px bg-[#aaa5a0]" /><div className="h-[7px] w-px bg-[#aaa5a0]" />
            </div>
            <div className="flex-1" />
            <div className="flex w-[14px] items-center justify-center border-l border-[#8d8882] bg-[linear-gradient(to_bottom,#fdfdfc,#e6e2de)]"><Arrow d={AR} /></div>
          </div>
        </div>
      </div>
    </div>
    <div className="flex h-[6px] shrink-0 justify-center border-t border-[#c9c4bf] pt-px">
      <div className="h-[4px] w-10 bg-[repeating-linear-gradient(to_right,#b7b3ae_0_1px,#fbfaf9_1px_2px)]" />
    </div>
    <div className="flex h-[254px] shrink-0">
      <div className="ml-px flex h-[253px] w-7 shrink-0 flex-col border-r border-t border-r-[#b9b4ae] border-t-white pr-px">
        <VCell><Play /></VCell>
        <VSep />
        <VCell><PlugChip kind="run" /></VCell>
        <VCell><PlugChip kind="stop" /></VCell>
        <VSep />
        <VCell><PlugChip kind="ok" /></VCell>
        <VSep />
        <VCell><Columns /></VCell>
      </div>
      <div className="flex w-[248px] flex-col">
        <div className="flex h-[33px] shrink-0 items-center gap-[10px] pl-[6px]">
          <Cycle />
          <span>No Processes Running</span>
        </div>
        <div className="flex h-[221px] w-[248px] shrink-0 border border-[#aea9a2] bg-[#efebe7] p-px">
          <div className="flex w-[229px] flex-col overflow-hidden">
            <div className={`flex h-[26px] shrink-0 items-center justify-between pl-1 ${HEAD}`}>
              <span className="whitespace-nowrap">Processes: sr_rtl - Behavioral</span>
              <div className="h-[19px] w-[2px] border-l border-[#c4bfba] bg-white" />
            </div>
            <div className="flex h-[192px] flex-col overflow-hidden bg-white">
              {PROCESS_ROWS.map((r) => (
                <Row key={r.text} {...r} textPad="w-[38px]" />
              ))}
            </div>
          </div>
          <div className="flex w-[15px] shrink-0 flex-col rounded-[2px] border border-[#8d8882] bg-[#d5cdc5]">
            <div className="flex h-[14px] items-center justify-center border-b border-[#8d8882] bg-[linear-gradient(to_right,#fdfdfc,#e6e2de)]"><Arrow d={AU} /></div>
            <div className="flex h-[156px] flex-col items-center justify-center gap-[2px] border-b border-[#8d8882] bg-[linear-gradient(to_right,#f8f7f5,#e2ddd8)]">
              <div className="h-px w-[7px] bg-[#aaa5a0]" /><div className="h-px w-[7px] bg-[#aaa5a0]" /><div className="h-px w-[7px] bg-[#aaa5a0]" />
            </div>
            <div className="flex-1" />
            <div className="flex h-[14px] items-center justify-center border-t border-[#8d8882] bg-[linear-gradient(to_right,#fdfdfc,#e6e2de)]"><Arrow d={AD} /></div>
          </div>
        </div>
      </div>
    </div>
    <div className="flex h-[25px] w-[276px] shrink-0 items-start border-t border-[#8f8a84]">
      <Tab className="w-[74px]" icon={<Chevron w={16} h={14} a="#d9dc4d" b="#8f9108" />} iconBox="w-[33px] pl-[6px]" text="Start" />
      <Tab className="w-[86px]" icon={<Flow />} iconBox="w-[32px] pl-[5px]" text="Design" sel />
      <Tab className="w-[72px]" icon={<FilesIc />} iconBox="w-[33px] pl-[7px]" text="Files" />
      <Tab className="w-[14px] !border-r-0" icon={<FilesIc a="#f6e98a" s="#2b63b4" />} iconBox="w-[14px] pl-[6px] overflow-hidden" text="" />
      <div className="flex h-[23px] w-[15px] items-center justify-center rounded-[2px] border border-[#c8c3be] bg-[#f4f1ee]"><Arrow d={AL} c="#aaa6a1" /></div>
      <div className="flex h-[23px] w-[15px] items-center justify-center rounded-[2px] border border-[#8d8882] bg-[linear-gradient(to_bottom,#fdfdfc,#e6e2de)]"><Arrow d={AR} /></div>
    </div>
  </div>
);

/* ---------- tabs ---------- */
function Tab({ className = "", icon, iconBox, text, sel, textClass = "", close }) {
  return (
    <div
      className={`flex shrink-0 items-center whitespace-nowrap border-r border-[#8f8a84] ${
        sel
          ? "-mt-px h-[26px] rounded-b-[3px] border-b-[3px] border-b-[#4f7ba3] bg-[linear-gradient(to_bottom,#e9e5e1,#f5f2ef)] pt-[2px]"
          : "h-[23px] rounded-b-[3px] border-b bg-[linear-gradient(to_bottom,#cac5bf,#eae5e1)]"
      } ${className}`}
    >
      <div className={`flex shrink-0 items-center ${iconBox}`}>{icon}</div>
      <span className={textClass}>{text}</span>
      {close && <div className="mr-[8px]"><TabX /></div>}
    </div>
  );
}

/* ---------- schematic ---------- */
const Schematic = () => (
  <svg width="1209" height="570" viewBox="390 121 1209 570" fill="none" className="block" shapeRendering="crispEdges">
    <rect x="772.500" y="152.500" width="443" height="507" stroke="#808080" />
    <rect x="881.500" y="261.500" width="232" height="289" stroke="#00f" />
    <path d="M881 261h30.500l-30.500 30zM1114 261h-32l32 31zM881 551h30.500l-30.500-31zM1114 551h-32l32-32z" fill="#00f" />
    <path d="M823 319.500h117M823 376.500h117M823 434.500h117M823 492.500h117M1054 319.500h117M1054 492.500h117" stroke="#00f" />
    <g fill="#00f" fontFamily="Liberation Sans, Arial, sans-serif" fontSize="21.700">
      <text x="852" y="315" textAnchor="end">Clk</text>
      <text x="852.500" y="373" textAnchor="end">R</text>
      <text x="852" y="430" textAnchor="end">Reset</text>
      <text x="851.500" y="488" textAnchor="end">S</text>
      <text x="1140.500" y="315">Q</text>
      <text x="1140.500" y="488">QBar</text>
      <g fontSize="50.500">
        <text x="940" y="242">sr_rtl</text>
        <text x="940" y="603">sr_rtl</text>
      </g>
    </g>
  </svg>
);

const ListBox = ({ title, children, className }) => (
  <div className={`flex h-[77px] shrink-0 flex-col border border-[#aea9a2] bg-[#efebe7] p-px ${className}`}>
    <div className={`flex h-[26px] shrink-0 items-center pl-1 ${HEAD}`}>
      <span className="flex-1">{title}</span>
      <svg width="9" height="7" viewBox="0 0 9 7" fill="none" className="mr-[8px] block"><path d="M.8 1l3.700 3.700L8.200 1" stroke="#000" strokeWidth="2" /></svg>
      <div className="h-5 w-[2px] border-l border-[#c4bfba] bg-white" />
    </div>
    <div className="flex flex-1 flex-col bg-white">{children}</div>
  </div>
);

export default function App() {
  return (
    <div className="flex h-[900px] w-[1600px] flex-col overflow-hidden bg-[#efebe7] font-['DejaVu_Sans',sans-serif] text-[13px] leading-[16px] text-[#111]">
      {/* system bar */}
      <div className="grid h-[27px] shrink-0 grid-cols-3 items-center bg-[#131313] font-['Noto_Sans',sans-serif] text-[14px] text-[#e8e8e8]">
        <div className="flex items-center pl-[18px]">
          <span className="w-[98px] text-[14.900px]">Activities</span>
          <Chevron w={17} h={15} a="#c9c9c9" b="#808080" />
          <span className="ml-[6px] text-[14.900px]">_pn</span>
        </div>
        <div className="whitespace-pre pl-[253px] text-[14.300px]">Apr 9  10:30 AM</div>
        <div className="flex items-center justify-end gap-[13px] pr-[18px]">
          <svg width="16" height="15" viewBox="0 0 16 15" fill="#fff" className="block">
            <path d="M5.500 0h5v4h-5zM.5 10h5v4h-5zM11 10h5v4h-5z" />
            <path d="M8 4v3M3 10V7.500h10.500V10" stroke="#fff" fill="none" strokeWidth="1.300" />
          </svg>
          <svg width="15" height="15" viewBox="0 0 15 15" fill="none" className="block" stroke="#777">
            <path d="M.5 5h3l4-4v13l-4-4h-3z" fill="#8a8a8a" stroke="none" />
            <path d="M1 14.500L14 1.500" strokeWidth="1.400" />
            <path d="M9.500 5.500c1 1 1 3 0 4M11.500 4c2 2 2 5 0 7.500M13.500 3c1.500 3 1.500 6.500 0 9.500" strokeWidth="1.200" />
          </svg>
          <svg width="15" height="15" viewBox="0 0 15 15" fill="none" stroke="#ddd" className="block" strokeWidth="1.500">
            <path d="M4.500 2.200a6 6 0 1 0 6 0M7.500 0v7" />
          </svg>
        </div>
      </div>

      <div className="flex flex-1">
        <Launcher />
        <div className="flex w-[1524px] flex-col">
          {/* title bar */}
          <div className="flex h-[37px] shrink-0 items-center justify-between border-b border-t border-b-[#161616] border-t-[#333] bg-[#222] pr-[7px]">
            <div className="w-[1400px] whitespace-nowrap pl-[359px] font-['Noto_Sans',sans-serif] text-[14.400px] font-bold text-white">
              ISE Project Navigator (P.20131013) - /home/student/Desktop/13000122093/srflipflop/srflipflop.xise - [sr_rtl (RTL2)]
            </div>
            <div className="flex gap-3">
              <WinBtn><path d="M2 8.500h8" /></WinBtn>
              <WinBtn><path d="M2.500 4.500h5v5h-5z" /><path d="M4.500 2.500h5v5" stroke="#aaa" /></WinBtn>
              <WinBtn><path d="M2 2l8 8M10 2l-8 8" strokeWidth="1.300" /></WinBtn>
            </div>
          </div>
          {/* menu bar */}
          <div className="flex h-[26px] shrink-0 items-center border-b border-[#c9c5c0] bg-[linear-gradient(to_bottom,#f0ece9,#e2deda)] pr-[1px] pt-px">
            <div className="w-[22px]"><SchemFile /></div>
            {MENUS.map(([a, b, c, w]) => (
              <div key={a + b + c} className={`shrink-0 ${w}`}>
                {a}<span className="underline underline-offset-2">{b}</span>{c}
              </div>
            ))}
            <div className="ml-auto -mt-[5px] flex">
              <MdiBtn kind="min" />
              <MdiBtn kind="res" className="ml-px" />
              <MdiBtn kind="x" className="ml-[2px]" />
            </div>
          </div>
          {/* tool bar */}
          <div className="flex h-[30px] shrink-0 border-b border-t border-b-[#b1aca6] border-t-white">
            <Group className="w-[162px]">
              <Cell><NewFile /></Cell>
              <Cell><OpenFile /></Cell>
              <Cell><Save /></Cell>
              <Cell><SaveAll /></Cell>
              <HSep />
              <Cell><Printer /></Cell>
            </Group>
            <Group className="w-[185px]">
              <Cell><Cut /></Cell>
              <Cell><Copy /></Cell>
              <Cell><Paste /></Cell>
              <Cell><Del /></Cell>
              <HSep />
              <Cell><Undo /></Cell>
              <svg width="8" height="8" viewBox="0 0 8 8" fill="none" className="ml-[13px] block" stroke="#000" strokeWidth="1.500">
                <path d="M.8 1.300L3.300 4 .8 6.700M4.300 1.300L6.800 4 4.300 6.700" />
              </svg>
            </Group>
            <Group className="w-[220px]">
              <Cell><Lens kind="in" /></Cell>
              <Cell><Lens kind="out" /></Cell>
              <Cell><Lens kind="fit" /></Cell>
              <Cell><Lens kind="fit2" /></Cell>
              <Cell><Lens kind="sel" /></Cell>
              <Cell><RefreshPage /></Cell>
              <HSep />
              <Cell on><Hammer /></Cell>
            </Group>
            <Group className="w-[125px]">
              <Cell><Cascade /></Cell>
              <Cell><TileH /></Cell>
              <Cell><Columns /></Cell>
              <Cell><Layer /></Cell>
            </Group>
            <Group className="w-[67px]">
              <Cell><Wrench /></Cell>
              <Cell><WhatsThis /></Cell>
            </Group>
            <Group className="w-[96px]">
              <Cell><Play /></Cell>
              <Cell><Sigma /></Cell>
              <Cell><Telescope /></Cell>
            </Group>
            <Group className="w-[60px] !border-r-transparent">
              <Cell><Bulb /></Cell>
            </Group>
          </div>

          {/* work area */}
          <div className="flex h-[600px] shrink-0">
            <DesignDock />
            <div className="flex w-[5px] shrink-0 flex-col">
              <div className="mt-[279px] h-10 w-1 bg-[repeating-linear-gradient(to_bottom,#b7b3ae_0_1px,#fbfaf9_1px_2px)]" />
            </div>
            <div className="flex w-[1242px] flex-col">
              <div className="flex h-[573px] shrink-0">
                <div className="flex w-[29px] shrink-0 flex-col border-l border-white">
                  <VCell><SelectArrow /></VCell>
                  <VCell on><FitSel /></VCell>
                  <VSep />
                  <VCell><Stars /></VCell>
                  <VSep />
                  <VCell><Cone /></VCell>
                  <VCell><Cone flip /></VCell>
                  <VSep />
                  <VCell><GrayWin /></VCell>
                  <VCell><GrayTwo /></VCell>
                  <VCell><GrayChip /></VCell>
                  <VCell><GrayChip x /></VCell>
                  <VSep />
                  <VCell><GrayGate /></VCell>
                  <VCell><TextTool /></VCell>
                  <VSep />
                  <VCell><UpHier /></VCell>
                  <VCell><NavCircle /></VCell>
                  <VCell><NavCircle flip /></VCell>
                  <VCell><Hist /></VCell>
                  <VSep />
                  <VCell><Pair /></VCell>
                  <VCell><GreenTag /></VCell>
                </div>
                <div className="h-[572px] flex-1 border border-l-2 border-[#b1aca6] bg-white pl-px"><Schematic /></div>
              </div>
              <div className="ml-[2px] flex h-[27px] shrink-0 items-start border-t border-[#8f8a84]">
                <Tab className="w-[194px] border-l" icon={<DocBlue />} iconBox="w-[44px] pl-[4px]" text="sr_rtl.vhd" textClass="flex-1 pl-[19px]" close />
                <Tab className="w-[267px]" icon={<Sigma />} iconBox="w-[33px] pl-[7px]" text="Design Summary (out of date)" textClass="flex-1" close />
                <Tab className="w-[195px]" icon={<SchemFile />} iconBox="w-[44px] pl-[6px]" text="sr_rtl (RTL1)" textClass="flex-1 pl-[13px]" close />
                <Tab className="w-[195px]" icon={<DocBlue />} iconBox="w-[44px] pl-[6px]" text="sr_test.vhd" textClass="flex-1 pl-[15px]" close />
                <Tab className="w-[193px]" icon={<SchemFile />} iconBox="w-[42px] pl-[5px]" text="sr_rtl (RTL2)" textClass="flex-1 pl-[14px]" close sel />
              </div>
            </div>
          </div>

          {/* splitter */}
          <div className="flex h-[6px] shrink-0 justify-center pr-[2px] pt-px">
            <div className="h-[4px] w-10 bg-[repeating-linear-gradient(to_right,#b7b3ae_0_1px,#fbfaf9_1px_2px)]" />
          </div>

          {/* view by category */}
          <div className="ml-px flex h-[19px] shrink-0 items-center justify-between border border-[#c9c5c0] pl-[3px] pr-[1px] shadow-[inset_0_1px_0_#fff]">
            <span className="relative -top-px">View by Category</span>
            <DockBtns />
          </div>
          <div className="flex h-[106px] shrink-0 pl-[4px]">
            <div className="flex w-[751px] flex-col">
              <div className="flex h-[25px] items-center justify-center font-bold text-black"><span className="relative -top-[3px]">Design Objects of Top Level Block</span></div>
              <div className="flex">
                <ListBox title="Instances" className="w-[246px]">
                  <Row only icons={<HierRed />} textPad="w-[22px]" text="sr_rtl" />
                </ListBox>
                <ListBox title="Pins" className="ml-[6px] w-[247px]" />
                <ListBox title="Signals" className="ml-[6px] w-[246px]" />
              </div>
            </div>
            <div className="flex w-[14px] shrink-0 pl-[6px]">
              <div className="mt-[33px] h-10 w-1 bg-[repeating-linear-gradient(to_bottom,#b7b3ae_0_1px,#fbfaf9_1px_2px)]" />
            </div>
            <div className="flex w-[751px] flex-col">
              <div className="flex h-[25px] items-center justify-center pl-[2px] font-bold text-black"><span className="relative -top-[3px]">Properties: (No Selection)</span></div>
              <div className="flex h-[77px] flex-col border border-[#aea9a2] bg-[#efebe7] p-px">
                <div className={`flex h-[26px] shrink-0 items-center pl-1 ${HEAD}`}>
                  <span className="w-[351px]">Name</span>
                  <svg width="9" height="7" viewBox="0 0 9 7" fill="none" className="block"><path d="M.8 5l3.700-3.700L8.200 5" stroke="#000" strokeWidth="2" /></svg>
                  <div className="ml-[8px] h-5 w-[2px] border-l border-[#c4bfba] bg-white" />
                  <span className="ml-1 flex-1">Value</span>
                  <div className="h-5 w-[2px] border-l border-[#c4bfba] bg-white" />
                </div>
                <div className="flex-1 bg-white" />
              </div>
            </div>
          </div>
          {/* bottom tabs */}
          <div className="flex h-[26px] shrink-0 items-start border-t border-[#8f8a84]">
            <Tab className="w-[94px]" icon={<I><g transform="translate(2 0)"><Doc x={0} /></g></I>} iconBox="w-[33px] pl-[6px]" text="Console" />
            <Tab className="w-[80px]" icon={<ErrorIc />} iconBox="w-[33px] pl-[6px]" text="Errors" />
            <Tab className="w-[102px]" icon={<Warn />} iconBox="w-[33px] pl-[6px]" text="Warnings" />
            <Tab className="w-[169px]" icon={<Folder2 />} iconBox="w-[33px] pl-[6px]" text="Find in Files Results" />
            <Tab className="w-[156px]" icon={<GridIc />} iconBox="w-[32px] pl-[5px]" text="View by Category" sel />
          </div>
          <div className="flex flex-1 items-center justify-end pr-[5px] tracking-[-0.200px]">[820,344]</div>
        </div>
      </div>
    </div>
  );
}
